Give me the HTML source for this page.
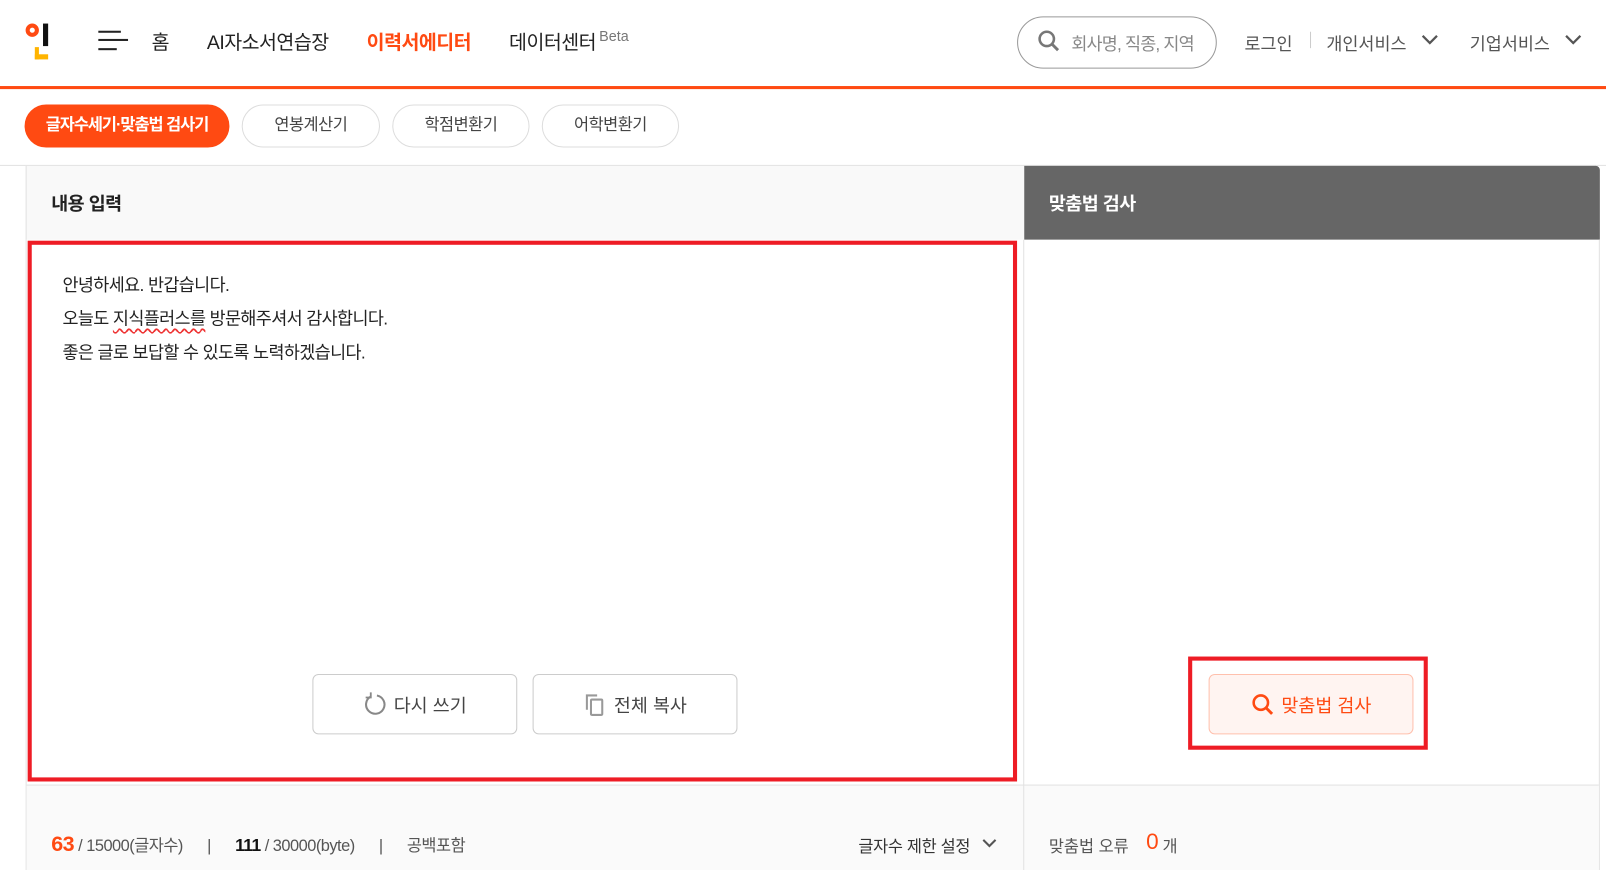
<!DOCTYPE html>
<html><head><meta charset="utf-8"><style>
*{margin:0;padding:0;box-sizing:border-box}
html,body{width:1606px;height:870px;overflow:hidden;background:#fff}
body{font-family:"Liberation Sans","Noto Sans CJK KR",sans-serif;color:#222;position:relative}
#w{position:absolute;left:0;top:0;width:1568px;height:850px;transform:scale(1.02424);transform-origin:0 0}
.a{position:absolute;white-space:nowrap}
.tab{position:absolute;top:102px;height:42px;border:1px solid #ddd;border-radius:21px;font-size:16px;color:#444;text-align:center;line-height:40px;letter-spacing:-0.5px}
.btn{position:absolute;border:1px solid #ccc;border-radius:6px;background:#fff;font-size:18px;color:#444;display:flex;align-items:center;justify-content:center;gap:6px}
</style></head><body><div id="w">
<div class="a" style="left:25px;top:23px;width:13px;height:13px;border:4px solid #ff4a12;border-radius:50%"></div>
<div class="a" style="left:42px;top:23px;width:5px;height:22px;background:#111"></div>
<div class="a" style="left:34px;top:46px;width:4px;height:12px;background:#ffb400"></div>
<div class="a" style="left:34px;top:53px;width:13px;height:5px;background:#ffb400"></div>
<div class="a" style="left:96px;top:30px;width:22px;height:2px;background:#222"></div>
<div class="a" style="left:96px;top:38px;width:29px;height:2px;background:#222"></div>
<div class="a" style="left:96px;top:47px;width:18px;height:2px;background:#222"></div>
<div class="a" style="left:148px;top:27px;font-size:19px">홈</div>
<div class="a" style="left:202px;top:27px;font-size:19px;letter-spacing:-0.5px">AI자소서연습장</div>
<div class="a" style="left:358px;top:27px;font-size:19px;color:#ff4a12;font-weight:bold;letter-spacing:-0.5px">이력서에디터</div>
<div class="a" style="left:497px;top:27px;font-size:19px;letter-spacing:-0.5px">데이터센터</div>
<div class="a" style="left:585px;top:27px;font-size:14px;color:#777">Beta</div>
<div class="a" style="left:993px;top:16px;width:195px;height:51px;border:1px solid #999;border-radius:26px"></div>
<svg class="a" style="left:1012px;top:28px" width="24" height="24" viewBox="0 0 24 24"><circle cx="10" cy="10" r="7" fill="none" stroke="#777" stroke-width="2.5"/><line x1="15" y1="15" x2="21" y2="21" stroke="#777" stroke-width="2.8"/></svg>
<div class="a" style="left:1046px;top:29px;font-size:17px;color:#888;letter-spacing:-0.8px">회사명, 직종, 지역</div>
<div class="a" style="left:1215px;top:29px;font-size:17px;color:#555">로그인</div>
<div class="a" style="left:1279px;top:31px;width:1px;height:16px;background:#ccc"></div>
<div class="a" style="left:1295px;top:29px;font-size:17px;color:#555">개인서비스</div>
<svg class="a" style="left:1387px;top:32px" width="18" height="14"><path d="M2 3 L9 10 L16 3" fill="none" stroke="#555" stroke-width="2.2"/></svg>
<div class="a" style="left:1435px;top:29px;font-size:17px;color:#555">기업서비스</div>
<svg class="a" style="left:1527px;top:32px" width="18" height="14"><path d="M2 3 L9 10 L16 3" fill="none" stroke="#555" stroke-width="2.2"/></svg>
<div class="a" style="left:0;top:84px;width:1568px;height:3px;background:#ff4a12"></div>
<div class="tab" style="left:24px;width:200px;background:#ff4a12;border-color:#ff4a12;color:#fff;font-weight:bold;letter-spacing:-1px">글자수세기·맞춤법 검사기</div>
<div class="tab" style="left:236px;width:135px">연봉계산기</div>
<div class="tab" style="left:383px;width:134px">학점변환기</div>
<div class="tab" style="left:529px;width:134px">어학변환기</div>
<div class="a" style="left:0;top:161px;width:1568px;height:1px;background:#e2e2e2"></div>
<div class="a" style="left:25px;top:162px;width:975px;height:72px;background:#f9f9f9;border-left:1px solid #e2e2e2"></div>
<div class="a" style="left:50px;top:185px;font-size:18px;font-weight:bold;letter-spacing:-0.5px">내용 입력</div>
<div class="a" style="left:1000px;top:162px;width:562px;height:72px;background:#666;border-top-right-radius:4px"></div>
<div class="a" style="left:1024px;top:185px;font-size:18px;font-weight:bold;color:#fff;letter-spacing:-0.5px">맞춤법 검사</div>
<div class="a" style="left:25px;top:234px;width:1px;height:636px;background:#e2e2e2"></div>
<div class="a" style="left:999px;top:234px;width:1px;height:636px;background:#e2e2e2"></div>
<div class="a" style="left:1561px;top:234px;width:1px;height:636px;background:#e2e2e2"></div>
<div class="a" style="left:26px;top:766px;width:1535px;height:104px;background:#fafafa;border-top:1px solid #e2e2e2"></div>
<div class="a" style="left:999px;top:766px;width:1px;height:104px;background:#e2e2e2"></div>
<div class="a" style="left:27px;top:235px;width:966px;height:528px;border:4px solid #ee1c25"></div>
<div class="a" style="left:61px;top:262px;font-size:17px;line-height:33px;letter-spacing:-0.6px">안녕하세요. 반갑습니다.<br>오늘도 <span style="text-decoration:underline wavy #e33;text-underline-offset:3px">지식플러스를</span> 방문해주셔서 감사합니다.<br>좋은 글로 보답할 수 있도록 노력하겠습니다.</div>
<div class="btn" style="left:305px;top:658px;width:200px;height:59px"><svg width="24" height="26" viewBox="0 0 24 26"><path d="M8 5 A9 9 0 1 0 14 4" fill="none" stroke="#888" stroke-width="2"/><path d="M8 1 L8 6 L3 6" fill="none" stroke="#888" stroke-width="1.8"/></svg>다시 쓰기</div>
<div class="btn" style="left:520px;top:658px;width:200px;height:59px"><svg width="24" height="26" viewBox="0 0 24 26"><path d="M4 18 V4 H14" fill="none" stroke="#999" stroke-width="2"/><rect x="8" y="8" width="11" height="15" rx="1" fill="none" stroke="#999" stroke-width="2"/></svg>전체 복사</div>
<div class="a" style="left:1160px;top:641px;width:234px;height:91px;border:4px solid #ee1c25"></div>
<div class="btn" style="left:1180px;top:658px;width:200px;height:59px;background:#fff4f1;border-color:#ffc0ad;color:#ff4a12"><svg width="24" height="24" viewBox="0 0 24 24"><circle cx="10" cy="10" r="7" fill="none" stroke="#ff4a12" stroke-width="2.5"/><line x1="15" y1="15" x2="21" y2="21" stroke="#ff4a12" stroke-width="2.8"/></svg>맞춤법 검사</div>
<div class="a" style="left:50px;top:812px;font-size:16px;color:#555;letter-spacing:-0.5px"><span style="color:#ff4a12;font-size:21px;font-weight:bold">63</span> / 15000(글자수) &nbsp;&nbsp;&nbsp;&nbsp;&nbsp;|&nbsp;&nbsp;&nbsp;&nbsp;&nbsp; <b style="color:#111;font-size:17px">111</b> / 30000(byte) &nbsp;&nbsp;&nbsp;&nbsp;&nbsp;|&nbsp;&nbsp;&nbsp;&nbsp;&nbsp; 공백포함</div>
<div class="a" style="left:838px;top:813px;font-size:16px;color:#333;letter-spacing:-0.3px">글자수 제한 설정</div>
<svg class="a" style="left:958px;top:817px" width="16" height="14"><path d="M2 3 L8 9 L14 3" fill="none" stroke="#555" stroke-width="2"/></svg>
<div class="a" style="left:1024px;top:813px;font-size:16px;color:#555">맞춤법 오류</div>
<div class="a" style="left:1119px;top:809px;font-size:22px;color:#ff4a12">0</div>
<div class="a" style="left:1135px;top:813px;font-size:16px;color:#555">개</div>
</div></body></html>
